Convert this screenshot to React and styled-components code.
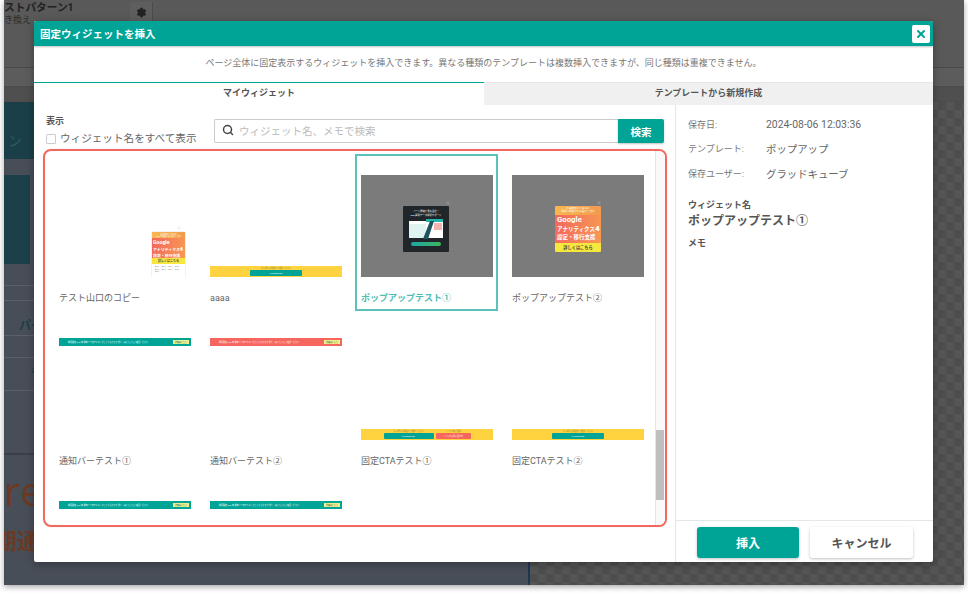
import React from "react";
import styled, { createGlobalStyle } from "styled-components";
import { Search, X, Settings } from "lucide-react";

const FONT = `Roboto, "Noto Sans CJK JP", "Noto Sans", sans-serif`;

const Global = createGlobalStyle`
  html, body { margin: 0; padding: 0; background: #fff; width: 968px; height: 594px; overflow: hidden; }
  * { box-sizing: border-box; }
  body { font-family: ${FONT}; color: #555; }
`;

const Stage = styled.div`
  position: relative;
  width: 960px;
  height: 585px;
  margin-left: 4px;
  overflow: hidden;
  background: #484e57;
  box-shadow: 0 2px 6px rgba(0,0,0,.35);
  display: flex;
  flex-direction: column;
`;
const PageTop = styled.div`
  height: 68px;
  flex: none;
  background: #595959;
  display: flex;
  border-bottom: 1px solid #4a4a4a;
`;
const PageTitle = styled.div`
  width: 126px;
  padding-top: 1px;
  font-size: 10.7px;
  line-height: 14px;
  color: #222;
  font-weight: 700;
  white-space: nowrap;
  span { display: block; font-size: 9px; font-weight: 400; line-height: 11px; color: #2a2a2a; }
`;
const GearBox = styled.div`
  width: 23px;
  height: 21px;
  margin-top: 2px;
  border-right: 1px solid #4b4b4b;
  background: #5e5e5e;
  display: flex;
  justify-content: center;
  align-items: center;
  color: #222;
`;
const PageBand = styled.div`
  height: ${p => p.$h}px;
  flex: none;
  background: ${p => p.$bg};
  border-bottom: 1px solid #4c4c4c;
`;
const PageBody = styled.div`
  flex: 1;
  display: grid;
  grid-template-columns: 526px 1fr;
  min-height: 0;
`;
const LeftPane = styled.div`
  display: flex;
  flex-direction: column;
  border-right: 2px solid #1d3557;
  overflow: hidden;
`;
const TealHead = styled.div`
  height: 57px;
  flex: none;
  background: #1b3f48;
  color: #2b5a63;
  font-size: 14px;
  line-height: 78px;
  padding-left: 4px;
  margin-bottom: 16px;
`;
const TealBlock = styled.div`
  width: 26px;
  height: 89px;
  flex: none;
  background: #1b4049;
  margin-bottom: 21px;
`;
const PageRow = styled.div`
  height: ${p => p.$h}px;
  flex: none;
  border-top: 1px solid #5b5f67;
  color: #1b3f48;
  font-size: 12px;
  font-weight: 700;
  white-space: nowrap;
  overflow: hidden;
  padding-left: ${p => p.$pad || 0}px;
  line-height: ${p => p.$lh || p.$h}px;
`;
const Headline = styled.div`
  border-top: 2px solid #3b3e44;
  flex: 1;
  color: #6b3a24;
  padding-top: 14px;
  font-weight: 500;
  white-space: nowrap;
`;
const BigLatin = styled.div`
  font-family: "Open Sans", sans-serif;
  font-size: 40px;
  line-height: 44px;
`;
const BigCjk = styled.div`
  font-size: 22px;
  line-height: 30px;
  font-weight: 700;
  margin: 14px 0 0 -9px;
`;
const Checker = styled.div`
  background-color: #555;
  background-image:
    linear-gradient(45deg, #4d4d4d 25%, transparent 25%, transparent 75%, #4d4d4d 75%),
    linear-gradient(45deg, #4d4d4d 25%, transparent 25%, transparent 75%, #4d4d4d 75%);
  background-size: 16px 16px;
  background-position: 0 0, 8px 8px;
`;

const Modal = styled.div`
  position: absolute;
  left: 30px;
  top: 21px;
  width: 899px;
  height: 541px;
  background: #fff;
  display: flex;
  flex-direction: column;
  border-radius: 2px;
  overflow: hidden;
  box-shadow: 0 2px 8px rgba(0,0,0,.3);
`;
const ModalHead = styled.div`
  height: 25px;
  flex: none;
  background: #00a497;
  color: #fff;
  font-size: 10.5px;
  font-weight: 700;
  display: flex;
  align-items: center;
  justify-content: space-between;
  padding: 0 3px 0 6px;
  box-shadow: 0 1px 2px rgba(0,0,0,.25);
`;
const CloseBtn = styled.div`
  width: 18px;
  height: 18px;
  background: #fff;
  color: #00a497;
  border-radius: 2px;
  display: flex;
  align-items: center;
  justify-content: center;
`;
const Notice = styled.div`
  height: 36px;
  flex: none;
  text-align: center;
  font-size: 9px;
  color: #777;
  line-height: 34px;
`;
const Tabs = styled.div`
  height: 23px;
  flex: none;
  display: flex;
`;
const Tab = styled.div`
  width: ${p => p.$w}px;
  flex: ${p => (p.$w ? "none" : 1)};
  text-align: center;
  font-size: 9px;
  font-weight: 700;
  line-height: 20px;
  color: #555;
  background: ${p => (p.$active ? "#fff" : "#f0f0f0")};
  border-top: 1px solid ${p => (p.$active ? "#00a497" : "#e6e6e6")};
`;
const Body = styled.div`
  flex: 1;
  min-height: 0;
  display: flex;
`;
const Main = styled.div`
  width: 642px;
  flex: none;
  border-right: 1px solid #e6e6e6;
  padding: 10px 11px 0 9px;
  display: flex;
  flex-direction: column;
`;
const FilterBar = styled.div`
  display: flex;
  height: 34px;
  flex: none;
`;
const ShowBox = styled.div`
  width: 171px;
  flex: none;
  padding-left: 3px;
`;
const ShowLabel = styled.div`
  font-size: 9px;
  font-weight: 700;
  line-height: 13px;
  color: #555;
`;
const CheckRow = styled.label`
  display: flex;
  align-items: center;
  gap: 4px;
  margin-top: 3px;
  font-size: 10.6px;
  line-height: 16px;
  color: #666;
  white-space: nowrap;
`;
const CheckBox = styled.span`
  width: 10px;
  height: 10px;
  border: 1px solid #ccc;
  background: #fff;
  border-radius: 1px;
`;
const SearchWrap = styled.div`
  flex: 1;
  display: flex;
  height: 24px;
  margin-top: 4px;
`;
const SearchBox = styled.div`
  flex: 1;
  border: 1px solid #ccc;
  border-right: 0;
  border-radius: 2px 0 0 2px;
  display: flex;
  align-items: center;
  gap: 5px;
  padding: 0 0 2px 7px;
  font-size: 10.5px;
  color: #bbb;
  svg { color: #444; }
`;
const SearchBtn = styled.div`
  width: 46px;
  background: #00a497;
  color: #fff;
  font-size: 10.5px;
  font-weight: 700;
  border-radius: 0 2px 2px 0;
  display: flex;
  align-items: center;
  justify-content: center;
  box-shadow: 0 1px 2px rgba(0,0,0,.25);
`;
const ListFrame = styled.div`
  position: relative;
  width: 624px;
  height: 378px;
  flex: none;
  border: 2px solid #f0695f;
  border-radius: 8px;
  overflow: hidden;
  display: flex;
  box-shadow: 0 0 1px rgba(240,105,95,.5);
`;
const Grid = styled.div`
  flex: 1;
  display: grid;
  grid-template-columns: repeat(4, 143px);
  grid-auto-rows: 163px;
  column-gap: 8px;
  padding-left: 8px;
  align-content: start;
`;
const Card = styled.div`
  width: 143px;
  height: 157px;
  margin-top: 3px;
  padding-left: 4px;
  border: 2px solid ${p => (p.$sel ? "#5cc2b9" : "transparent")};
  display: flex;
  flex-direction: column;
`;
const Thumb = styled.div`
  width: 132px;
  height: 102px;
  margin-top: 19px;
  flex: none;
  position: relative;
  background: ${p => (p.$dim ? "#7b7b7b" : "transparent")};
  display: flex;
  flex-direction: column;
  align-items: center;
  justify-content: ${p => (p.$top ? "flex-start" : "flex-end")};
  overflow: hidden;
`;
const CardName = styled.div`
  margin-top: 15px;
  font-size: 9px;
  line-height: 13px;
  color: ${p => (p.$sel ? "#4fbcb2" : "#666")};
  font-weight: ${p => (p.$sel ? 700 : 400)};
  white-space: nowrap;
`;
const Tiny = styled.span`
  font-size: 2px;
  line-height: 3px;
  white-space: nowrap;
`;
const CtaStrip = styled.div`
  width: 132px;
  height: 11px;
  flex: none;
  background: #ffd23f;
  display: flex;
  align-items: flex-end;
  justify-content: center;
  gap: 2px;
`;
const CtaCol = styled.div`
  display: flex;
  flex-direction: column;
  align-items: center;
  color: #8a7a30;
`;
const NoticeStrip = styled.div`
  width: 132px;
  height: 8px;
  flex: none;
  background: ${p => p.$bg};
  color: #fff;
  display: flex;
  align-items: center;
  justify-content: space-between;
  padding: 0 2px 0 9px;
  overflow: hidden;
`;
const Pill = styled.div`
  width: ${p => p.$w}px;
  height: 6px;
  margin-bottom: 1px;
  background: ${p => p.$bg};
  border-radius: 1px;
  color: #fff;
  font-size: 2px;
  line-height: 6px;
  text-align: center;
  white-space: nowrap;
`;
const Tag = styled.div`
  width: 16px;
  height: 4px;
  flex: none;
  background: #f2f08c;
  color: #00695f;
  font-size: 2px;
  line-height: 4px;
  text-align: center;
  white-space: nowrap;
`;
const Poster = styled.div`
  position: absolute;
  left: ${p => p.$l}px;
  top: ${p => p.$t}px;
  width: 46px;
  height: 46px;
  border-radius: 1px;
  overflow: hidden;
`;
const GaHead = styled.div`
  background: linear-gradient(90deg,#f7b84f,#f29a4e);
  color: #fff;
  font-size: 2.6px;
  line-height: 3.4px;
  height: 9px;
  padding: 1px 1px 0;
  text-align: center;
  white-space: nowrap;
`;
const GaMain = styled.div`
  background: linear-gradient(100deg,#f4665e,#f79a52);
  color: #fff;
  font-weight: 700;
  padding: 1px 1px 0 2px;
  font-size: 5.5px;
  line-height: 8.5px;
  height: 28px;
  white-space: nowrap;
  i { font-style: normal; font-size: 7.8px; }
  b { font-size: 8px; }
`;
const GaCta = styled.div`
  background: #f6e73f;
  color: #444;
  font-size: 4.2px;
  font-weight: 700;
  text-align: center;
  line-height: 9px;
  height: 9px;
  white-space: nowrap;
`;
const SmallPoster = styled.div`
  width: 33px;
  height: 45px;
  flex: none;
  align-self: flex-end;
  margin-right: 6px;
  background: #fff;
  overflow: hidden;
  box-shadow: 0 0 1px rgba(0,0,0,.3);
`;
const SGaHead = styled(GaHead)`
  font-size: 1.9px; height: 6px; line-height: 2.4px; padding: .5px 0 0;
`;
const SGaMain = styled(GaMain)`
  font-size: 3.9px; line-height: 6px; height: 20px; padding: 1px 0 0 1px;
  i { font-size: 5.2px; }
  b { font-size: 5.4px; }
`;
const SGaCta = styled(GaCta)`
  font-size: 3px; height: 6px; line-height: 6px;
`;
const SBody = styled.div`
  font-size: 1.7px; line-height: 2.6px; color: #444; padding: 1px 1px; white-space: nowrap; overflow: hidden;
`;
const DarkPoster = styled(Poster)`
  background: #20262a;
  color: #fff;
  text-align: center;
  font-size: 2.4px;
  line-height: 4px;
  padding-top: 4px;
  white-space: nowrap;
`;
const GoPill = styled.div`
  width: 30px;
  height: 4px;
  margin: 3px auto 0;
  border-radius: 2px;
  background: linear-gradient(90deg,#1fa5a8,#3db85c);
`;
const CloseX = styled.span`
  position: absolute;
  left: ${p => p.$l}px;
  top: ${p => p.$t}px;
  color: ${p => p.$color || "#a8a8a8"};
  display: flex;
`;
const Shots = styled.svg`
  display: block;
  width: 46px;
  height: 20px;
  margin-top: 1px;
`;
const ScrollTrack = styled.div`
  width: 10px;
  flex: none;
  background: #f9f9f9;
  border-left: 1px solid #e4e4e4;
  position: relative;
`;
const ScrollThumb = styled.div`
  position: absolute;
  left: 0;
  right: 1px;
  top: 279px;
  height: 70px;
  background: #bfbfbf;
`;
const Side = styled.div`
  flex: 1;
  display: flex;
  flex-direction: column;
`;
const Info = styled.div`
  flex: 1;
  padding: 7px 12px;
`;
const Meta = styled.div`
  display: grid;
  grid-template-columns: 78px 1fr;
  align-items: center;
  height: 24.5px;
  font-size: 9px;
  color: #777;
  span:last-child { font-size: 10.4px; color: #666; }
`;
const SideLabel = styled.div`
  font-size: 9px;
  font-weight: 700;
  color: #555;
  line-height: 13px;
  margin-top: ${p => p.$mt}px;
`;
const SideName = styled.div`
  font-size: 12px;
  font-weight: 700;
  color: #555;
  line-height: 15px;
  margin-top: 2px;
`;
const Footer = styled.div`
  height: 42px;
  flex: none;
  border-top: 1px solid #e6e6e6;
  display: flex;
  gap: 11px;
  padding: 6px 0 0 21px;
`;
const Btn = styled.div`
  width: ${p => p.$w}px;
  height: 31px;
  border-radius: 3px;
  background: ${p => (p.$primary ? "#00a497" : "#fff")};
  color: ${p => (p.$primary ? "#fff" : "#555")};
  font-size: 12px;
  font-weight: 700;
  display: flex;
  align-items: center;
  justify-content: center;
  box-shadow: 0 1px 3px rgba(0,0,0,.25);
`;

const TEAL = "#00a497";
const line = "期間限定 2024年 通知バーのテキストがここに入ります 詳しくはこちらをご確認ください";

function SmallGa() {
  return (
    <>
      <CloseX $l={117} $t={50} $color="#ddd"><X size={6} /></CloseX>
      <SmallPoster>
        <SGaHead>お客様のビジネスに<br />GA4への移行をお届けします</SGaHead>
        <SGaMain><i>Google</i><br />アナリティクス<b>4</b><br />設定・移行支援</SGaMain>
        <SGaCta>詳しくはこちら</SGaCta>
        <SBody>テキストテキストテキストテキスト<br />テキストテキストテキストテキスト<br />テキスト</SBody>
      </SmallPoster>
    </>
  );
}

function CtaBar({ two }) {
  return (
    <CtaStrip>
      <CtaCol>
        <Tiny>お気軽にお電話でご相談ください</Tiny>
        <Pill $w={two ? 50 : 52} $bg={TEAL}>0120-000-000</Pill>
      </CtaCol>
      {two && (
        <CtaCol>
          <Tiny>メールでのご相談</Tiny>
          <Pill $w={35} $bg="#f4665e">メールでお問い合わせ</Pill>
        </CtaCol>
      )}
    </CtaStrip>
  );
}

function NoticeBar({ bg }) {
  return (
    <NoticeStrip $bg={bg}>
      <Tiny>{line}</Tiny>
      <Tag>詳細はこちら</Tag>
    </NoticeStrip>
  );
}

const cards = [
  { id: 1, name: "テスト山口のコピー", thumb: <SmallGa /> },
  { id: 2, name: "aaaa", thumb: <CtaBar /> },
  {
    id: 3, name: "ポップアップテスト①", sel: true, dim: true,
    thumb: (
      <>
        <CloseX $l={84} $t={25}><X size={6} /></CloseX>
        <DarkPoster $l={42} $t={31}>
          ページ遷移を見る会社！<br />GA4運用データ解析サポート
          <Shots viewBox="0 0 46 20">
            <rect x="6" y="2" width="34" height="17" fill="#fff" />
            <rect x="6" y="5" width="17" height="14" fill="#dff3f1" />
            <rect x="23" y="0" width="17" height="3" fill="#25b5a8" />
            <path d="M20 20 L27 2 H31 L25 20Z" fill="#1c5560" />
            <rect x="31" y="4" width="8" height="7" fill="#f4b5b0" />
          </Shots>
          <GoPill />
        </DarkPoster>
      </>
    ),
  },
  {
    id: 4, name: "ポップアップテスト②", dim: true,
    thumb: (
      <>
        <CloseX $l={84} $t={25}><X size={6} /></CloseX>
        <Poster $l={43} $t={31}>
          <GaHead>お客様のビジネスに<br />GA4への移行をお届けします</GaHead>
          <GaMain><i>Google</i><br />アナリティクス<b>4</b><br />設定・移行支援</GaMain>
          <GaCta>詳しくはこちら</GaCta>
        </Poster>
      </>
    ),
  },
  { id: 5, name: "通知バーテスト①", top: true, thumb: <NoticeBar bg={TEAL} /> },
  { id: 6, name: "通知バーテスト②", top: true, thumb: <NoticeBar bg="#f4665e" /> },
  { id: 7, name: "固定CTAテスト①", thumb: <CtaBar two /> },
  { id: 8, name: "固定CTAテスト②", thumb: <CtaBar /> },
  { id: 9, top: true, thumb: <NoticeBar bg={TEAL} /> },
  { id: 10, top: true, thumb: <NoticeBar bg={TEAL} /> },
];

export default function App() {
  return (
    <>
      <Global />
      <Stage>
        <PageTop>
          <PageTitle>ストパターン1<span>き換え</span></PageTitle>
          <GearBox><Settings size={11} fill="#222" /></GearBox>
        </PageTop>
        <PageBand $h={19} $bg="#5c5c5c" />
        <PageBand $h={15} $bg="#4f4f4f" />
        <PageBody>
          <LeftPane>
            <TealHead>ン</TealHead>
            <TealBlock />
            <PageRow $h={15} />
            <PageRow $h={35} $pad={15} $lh={50}>パー</PageRow>
            <PageRow $h={22} />
            <PageRow $h={33} $pad={26} $lh={32}>ラ</PageRow>
            <PageRow $h={63} />
            <Headline>
              <BigLatin>re</BigLatin>
              <BigCjk>期通</BigCjk>
            </Headline>
          </LeftPane>
          <Checker />
        </PageBody>
        <Modal>
          <ModalHead>
            固定ウィジェットを挿入
            <CloseBtn><X size={12} strokeWidth={4} /></CloseBtn>
          </ModalHead>
          <Notice>ページ全体に固定表示するウィジェットを挿入できます。異なる種類のテンプレートは複数挿入できますが、同じ種類は重複できません。</Notice>
          <Tabs>
            <Tab $active $w={450}>マイウィジェット</Tab>
            <Tab>テンプレートから新規作成</Tab>
          </Tabs>
          <Body>
            <Main>
              <FilterBar>
                <ShowBox>
                  <ShowLabel>表示</ShowLabel>
                  <CheckRow><CheckBox />ウィジェット名をすべて表示</CheckRow>
                </ShowBox>
                <SearchWrap>
                  <SearchBox><Search size={12} strokeWidth={3} />ウィジェット名、メモで検索</SearchBox>
                  <SearchBtn>検索</SearchBtn>
                </SearchWrap>
              </FilterBar>
              <ListFrame>
                <Grid>
                  {cards.map(c => (
                    <Card key={c.id} $sel={c.sel}>
                      <Thumb $dim={c.dim} $top={c.top}>{c.thumb}</Thumb>
                      {c.name && <CardName $sel={c.sel}>{c.name}</CardName>}
                    </Card>
                  ))}
                </Grid>
                <ScrollTrack><ScrollThumb /></ScrollTrack>
              </ListFrame>
            </Main>
            <Side>
              <Info>
                <Meta><span>保存日:</span><span>2024-08-06 12:03:36</span></Meta>
                <Meta><span>テンプレート:</span><span>ポップアップ</span></Meta>
                <Meta><span>保存ユーザー:</span><span>グラッドキューブ</span></Meta>
                <SideLabel $mt={13}>ウィジェット名</SideLabel>
                <SideName>ポップアップテスト①</SideName>
                <SideLabel $mt={8}>メモ</SideLabel>
              </Info>
              <Footer>
                <Btn $primary $w={102}>挿入</Btn>
                <Btn $w={103}>キャンセル</Btn>
              </Footer>
            </Side>
          </Body>
        </Modal>
      </Stage>
    </>
  );
}
